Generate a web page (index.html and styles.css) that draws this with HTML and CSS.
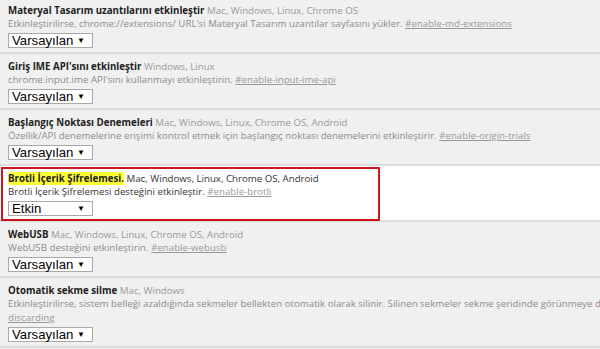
FILE: index.html
```html
<!DOCTYPE html>
<html lang="tr">
<head>
<meta charset="utf-8">
<title>Deneysel özellikler</title>
<link rel="stylesheet" href="styles.css">
</head>
<body>
<div class="page">
  <div class="exp first">
    <div class="title"><b class="name">Materyal Tasarım uzantılarını etkinleştir</b> <span class="plat">Mac, Windows, Linux, Chrome OS</span></div>
    <div class="desc">Etkinleştirilirse, chrome://extensions/ URL'si Materyal Tasarım uzantılar sayfasını yükler. <a class="link">#enable-md-extensions</a></div>
    <div class="select"><span>Varsayılan</span><span class="arrow">▼</span></div>
  </div>
  <div class="exp">
    <div class="title"><b class="name">Giriş IME API'sını etkinleştir</b> <span class="plat">Windows, Linux</span></div>
    <div class="desc">chrome.input.ime API'sını kullanmayı etkinleştirin. <a class="link">#enable-input-ime-api</a></div>
    <div class="select"><span>Varsayılan</span><span class="arrow">▼</span></div>
  </div>
  <div class="exp">
    <div class="title"><b class="name">Başlangıç Noktası Denemeleri</b> <span class="plat">Mac, Windows, Linux, Chrome OS, Android</span></div>
    <div class="desc">Özellik/API denemelerine erişimi kontrol etmek için başlangıç noktası denemelerini etkinleştirir. <a class="link">#enable-origin-trials</a></div>
    <div class="select"><span>Varsayılan</span><span class="arrow">▼</span></div>
  </div>
  <div class="exp active">
    <div class="title"><b class="name mark">Brotli İçerik Şifrelemesi.</b> <span class="plat">Mac, Windows, Linux, Chrome OS, Android</span></div>
    <div class="desc">Brotli İçerik Şifrelemesi desteğini etkinleştir. <a class="link">#enable-brotli</a></div>
    <div class="select"><span>Etkin</span><span class="arrow">▼</span></div>
    <div class="annot"></div>
  </div>
  <div class="exp">
    <div class="title"><b class="name">WebUSB</b> <span class="plat">Mac, Windows, Linux, Chrome OS, Android</span></div>
    <div class="desc">WebUSB desteğini etkinleştirin. <a class="link">#enable-webusb</a></div>
    <div class="select"><span>Varsayılan</span><span class="arrow">▼</span></div>
  </div>
  <div class="exp">
    <div class="title"><b class="name">Otomatik sekme silme</b> <span class="plat">Mac, Windows</span></div>
    <div class="desc nowrap">Etkinleştirilirse, sistem belleği azaldığında sekmeler bellekten otomatik olarak silinir. Silinen sekmeler sekme şeridinde görünmeye devam eder ve tıklandığında yeniden yüklenir. <a class="link">#automatic-tab-<br>discarding</a></div>
    <div class="select"><span>Varsayılan</span><span class="arrow">▼</span></div>
  </div>
</div>
</body>
</html>
```

FILE: styles.css
```css
html, body {
  margin: 0;
  padding: 0;
  overflow: hidden;
  background: #f0f0f0;
}
body {
  font-family: "Open Sans", "Noto Sans", sans-serif;
  font-size: 9.7px;
  color: #333;
}
.page {
  width: 1000px;
  margin-top: -2px;
}
.exp {
  position: relative;
  padding: 6px 0 4px 8px;
  border-bottom: 2px solid #dcdcdc;
}
.title {
  line-height: 13px;
  white-space: nowrap;
}
.name {
  font-weight: 700;
  color: #222;
}
.plat {
  color: #9a9a9a;
}
.desc {
  line-height: 14px;
  color: #8c8c8c;
}
.nowrap {
  white-space: nowrap;
}
.link {
  color: #999;
  text-decoration: underline;
}
.select {
  margin-top: 2px;
  height: 13px;
  border: 1px solid #a9a9a9;
  background: #fff;
  display: flex;
  justify-content: space-between;
  align-items: center;
  padding: 0 7px 0 3px;
  box-sizing: content-box;
  width: 73px;
  font-family: "Liberation Sans", Arial, sans-serif;
  font-size: 13.2px;
  line-height: 13px;
  color: #000;
}
.arrow {
  font-size: 8px;
  line-height: 8px;
}
.active {
  background: #fff;
}
.active .plat,
.active .desc {
  color: #333;
}
.active .link {
  color: #999;
}
.mark {
  background: #ffff33;
}
.annot {
  position: absolute;
  left: 1px;
  top: 1px;
  width: 375px;
  bottom: -1px;
  border: 2px solid #d0141c;
}
```
